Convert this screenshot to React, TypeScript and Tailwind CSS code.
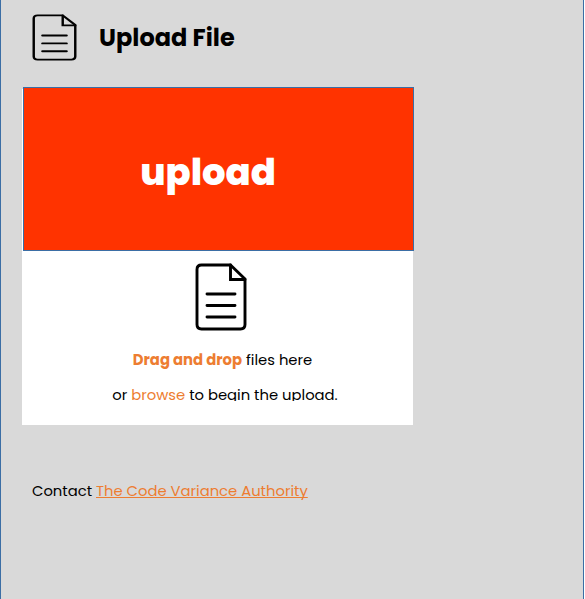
function FileIcon({ className, stroke }: { className: string; stroke: number }) {
  return (
    <svg className={className} viewBox="0 0 52 68" preserveAspectRatio="none" fill="none" stroke="#000" strokeWidth={stroke} strokeLinecap="round" strokeLinejoin="round">
      <path d="M6.5 2H35.5L50 16V61.5Q50 66 45.5 66H6.5Q2 66 2 61.5V6.5Q2 2 6.5 2Z" />
      <path d="M35.5 2V16.5H50" strokeLinejoin="miter" />
      <path d="M12 31H40M12 42.5H40M12 54H40" />
    </svg>
  );
}

export default function App() {
  return (
    <main className="h-[599px] w-[584px] overflow-hidden border-x border-[#3b6ea5] bg-[#d9d9d9] font-['Poppins','Inter',sans-serif] text-[14.8px] tracking-[-0.01px] text-black">
      <header className="flex h-[89px] items-start pl-[31px] pt-[13px]">
        <FileIcon className="mt-[0.6px] h-[47px] w-[45px] shrink-0" stroke={2.8} />
        <h1 className="ml-[22px] mt-[7px] whitespace-nowrap text-[24px] font-bold leading-[36px] tracking-[0.04px]">Upload File</h1>
      </header>
      <section className="ml-[21px] flex h-[336px] w-[391px] flex-col bg-white">
        <div className="-mt-[2px] ml-px flex h-[164px] w-[391px] shrink-0 items-center justify-center border border-[#3b6ea5] bg-[#ff3300] pr-[21px] pt-[7px] text-[37px] font-extrabold text-white">
          <span>upload</span>
        </div>
        <div className="flex h-[150px] flex-col items-center overflow-hidden pt-[12px]">
          <FileIcon className="ml-[7px] h-[68px] w-[52px] shrink-0" stroke={2.9} />
          <p className="ml-[10px] mt-[11px] h-[35px] shrink-0 whitespace-nowrap leading-[35px]">
            <span className="font-bold text-[#ed7d31]">Drag and drop</span> files here
          </p>
          <p className="ml-[15px] h-[35px] shrink-0 whitespace-nowrap leading-[35px]">
            or <span className="text-[#ed7d31]">browse</span> to begin the upload.
          </p>
        </div>
      </section>
      <footer className="ml-[31px] mt-[54px] whitespace-nowrap leading-[24px]">
        Contact <a className="text-[#ed7d31] underline underline-offset-1 [text-decoration-skip-ink:none]">The Code Variance Authority</a>
      </footer>
    </main>
  );
}
